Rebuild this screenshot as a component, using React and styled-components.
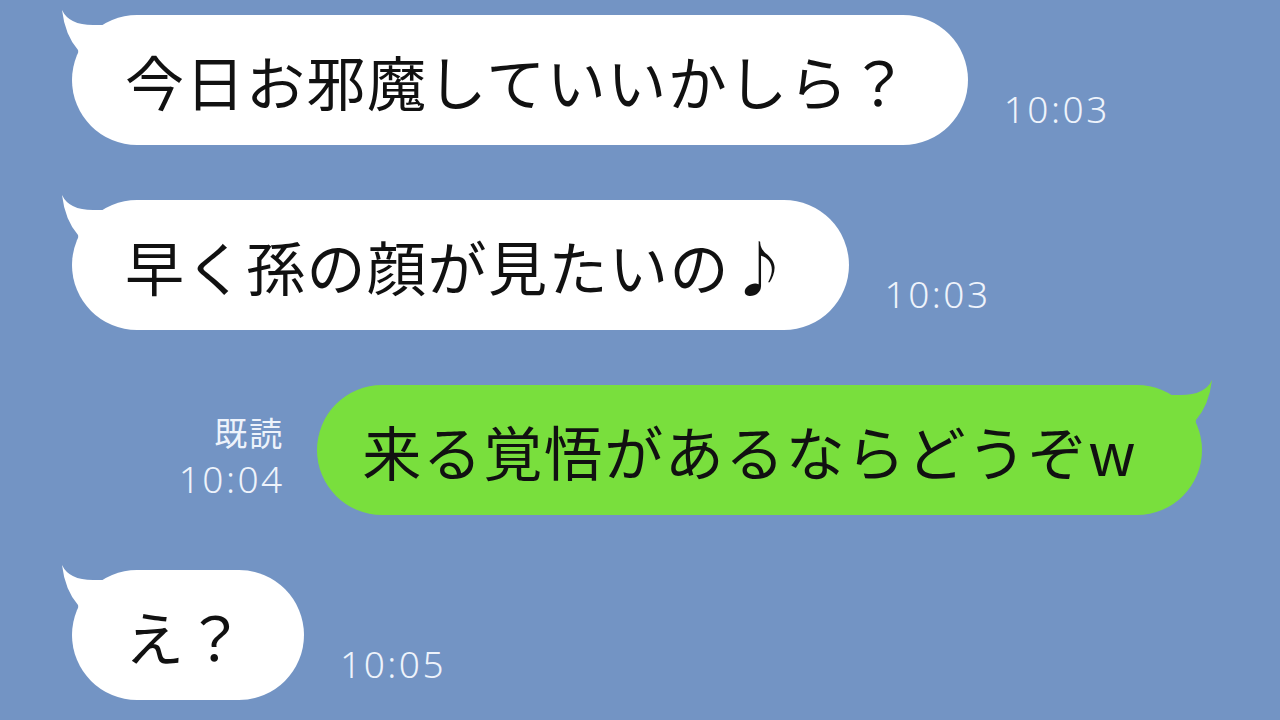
import React from 'react';
import styled, {createGlobalStyle} from 'styled-components';

const GlobalStyle = createGlobalStyle`
    html, body {
        margin: 0;
        padding: 0;
        background: #7394c4;
    }
    body {
        font-family: "Noto Sans CJK JP", "Noto Sans", sans-serif;
    }
`;

const messages = [
    {id: 1, side: 'left', text: '今日お邪魔していいかしら？', time: '10:03'},
    {id: 2, side: 'left', text: '早く孫の顔が見たいの♪', time: '10:03'},
    {id: 3, side: 'right', text: '来る覚悟があるならどうぞw', time: '10:04', read: true},
    {id: 4, side: 'left', text: 'え？', time: '10:05'},
];

function Tail({mine}) {
    return (
        <TailSvg $mine={mine} viewBox="0 0 50 56" width="50" height="56">
            <path d="M4 4 Q 11 19 35 19 L 48 19 L 48 56 L 22 56 L 20 44 Q 7 29 4 4 Z" fill={mine ? '#79df3d' : '#ffffff'} />
        </TailSvg>
    );
}

function Message({msg}) {
    const mine = msg.side === 'right';
    return (
        <Row $mine={mine}>
            {mine && (
                <Meta $mine>
                    {msg.read && <Read>既読</Read>}
                    <Time>{msg.time}</Time>
                </Meta>
            )}
            <Bubble $mine={mine}>
                <Tail mine={mine} />
                <BubbleText>{msg.text}</BubbleText>
            </Bubble>
            {!mine && (
                <Meta>
                    <Time>{msg.time}</Time>
                </Meta>
            )}
        </Row>
    );
}

function App() {
    return (
        <>
            <GlobalStyle />
            <Chat>
                {messages.map(m => <Message key={m.id} msg={m} />)}
            </Chat>
        </>
    );
}

const Chat = styled.main`
    width: 1280px;
    height: 720px;
    box-sizing: border-box;
    padding: 15px 78px 0 72px;
    display: flex;
    flex-direction: column;
    gap: 55px;
    background: #7394c4;
    overflow: hidden;
`;

const Row = styled.div`
    display: flex;
    align-items: flex-end;
    justify-content: ${p => p.$mine ? 'flex-end' : 'flex-start'};
    gap: ${p => p.$mine ? '35px' : '36px'};
`;

const Bubble = styled.div`
    position: relative;
    height: 130px;
    display: flex;
    align-items: center;
    box-sizing: border-box;
    padding: ${p => p.$mine ? '0 65px 0 45px' : '0 58px 0 53px'};
    border-radius: 65px / 65px;
    background: ${p => p.$mine ? '#79df3d' : '#ffffff'};
`;

const TailSvg = styled.svg`
    position: absolute;
    top: -9px;
    ${p => p.$mine ? 'right: -14px; transform: scaleX(-1);' : 'left: -14px;'}
`;

const BubbleText = styled.span`
    position: relative;
    font-size: 59px;
    letter-spacing: 1.5px;
    line-height: 1;
    color: #111;
    white-space: nowrap;
`;

const Meta = styled.div`
    display: flex;
    flex-direction: column;
    align-items: ${p => p.$mine ? 'flex-end' : 'flex-start'};
    gap: 6px;
    margin-bottom: 15px;
    color: #eef3fb;
`;

const Read = styled.span`
    font-family: "Noto Sans CJK JP", sans-serif;
    font-size: 33px;
    line-height: 40px;
    letter-spacing: 2px;
    margin-right: -2px;
`;

const Time = styled.span`
    font-family: "Noto Sans", "Noto Sans CJK JP", sans-serif;
    font-weight: 300;
    font-size: 37px;
    line-height: 42px;
    letter-spacing: 2.5px;
    margin-right: -2.5px;
`;

export default App;
